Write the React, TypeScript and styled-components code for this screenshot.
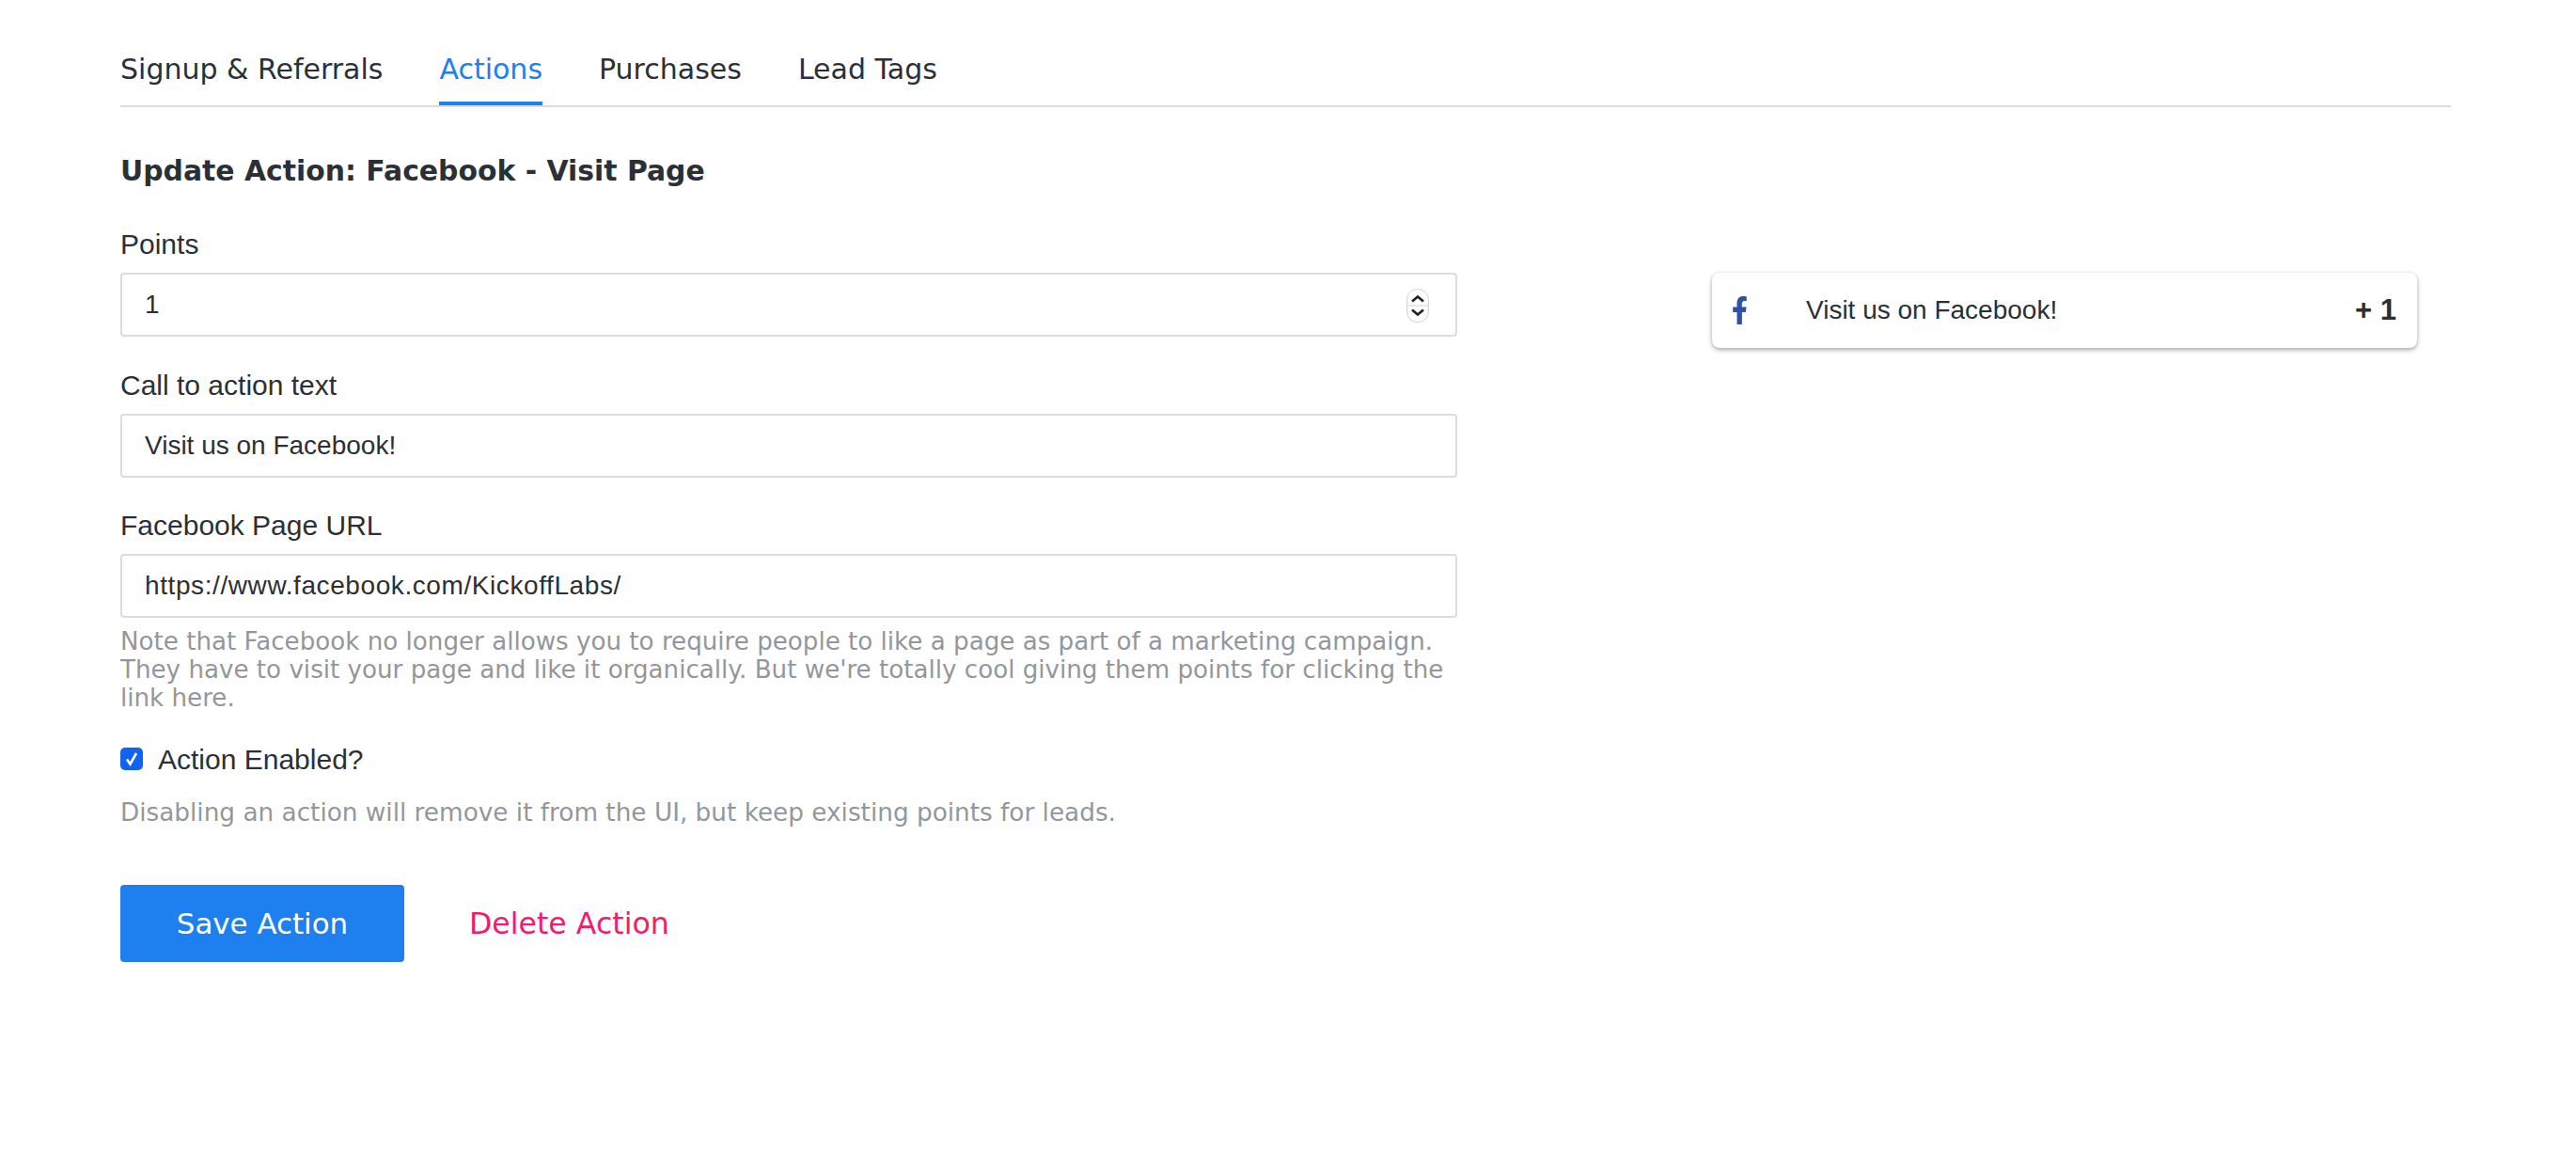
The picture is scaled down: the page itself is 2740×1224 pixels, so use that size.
import React from 'react';
import styled, { createGlobalStyle } from 'styled-components';

const GlobalStyle = createGlobalStyle`
  html, body {
    margin: 0;
    padding: 0;
    background: #fff;
  }
`;

const Page = styled.div`
  width: 2740px;
  height: 1224px;
  box-sizing: border-box;
  padding: 40px 133px 0 128px;
  background: #fff;
  color: #2b3036;
  font-family: 'Liberation Sans', Arial, sans-serif;
  overflow: hidden;
`;

const TabBar = styled.nav`
  display: flex;
  gap: 60px;
  height: 74px;
  box-sizing: border-box;
  border-bottom: 2px solid #dcdcdc;
`;

const Tab = styled.a<{ $active?: boolean }>`
  height: 72px;
  box-sizing: border-box;
  line-height: 68px;
  font-family: 'DejaVu Sans', Verdana, sans-serif;
  font-size: 30px;
  color: ${props => (props.$active ? '#1e80ef' : '#2b3036')};
  border-bottom: ${props => (props.$active ? '4px solid #1e80ef' : 'none')};
`;

const Content = styled.div`
  display: flex;
`;

const FormColumn = styled.form`
  width: 1422px;
  flex: none;
`;

const Heading = styled.h2`
  margin: 46px 0 0;
  height: 44px;
  line-height: 44px;
  font-family: 'DejaVu Sans', Verdana, sans-serif;
  font-size: 29.85px;
  font-weight: 700;
  color: #2b3036;
`;

const FieldGroup = styled.div`
  margin-top: 36px;
`;

const NextGroup = styled.div`
  margin-top: 31.5px;
`;

const Label = styled.label`
  display: block;
  height: 40px;
  line-height: 40px;
  font-size: 30px;
  color: #2b3036;
  margin-bottom: 10px;
`;

const InputWrap = styled.div`
  position: relative;
`;

const TextInput = styled.input<{ $spaced?: boolean }>`
  display: block;
  width: 100%;
  height: 68px;
  box-sizing: border-box;
  padding: 0 24px;
  border: 2px solid #dcdcdc;
  border-radius: 4px;
  background: #fff;
  font-family: 'Liberation Sans', Arial, sans-serif;
  font-size: 28px;
  letter-spacing: ${props => (props.$spaced ? '0.59px' : 'normal')};
  color: #2b3036;
  outline: none;
`;

const Spinner = styled.div`
  position: absolute;
  top: 17px;
  right: 30px;
  width: 24px;
  height: 36px;
`;

const Hint = styled.p<{ $top: number; $size: number }>`
  margin: ${props => props.$top}px 0 0;
  font-family: 'DejaVu Sans', Verdana, sans-serif;
  font-size: ${props => props.$size}px;
  line-height: 30px;
  color: #93979b;
`;

const CheckRow = styled.label`
  display: flex;
  align-items: center;
  gap: 16px;
  margin-top: 31px;
  height: 40px;
  font-size: 30px;
  color: #2b3036;
`;

const CheckBox = styled.span`
  display: flex;
  align-items: center;
  justify-content: center;
  width: 24px;
  height: 24px;
  margin-bottom: 2px;
  border-radius: 5px;
  background: #0f62f2;
`;

const ActionRow = styled.div`
  display: flex;
  align-items: center;
  gap: 69px;
  margin-top: 62px;
`;

const SaveButton = styled.button`
  width: 302px;
  height: 82px;
  border: none;
  border-radius: 4px;
  background: #1e80ef;
  color: #fff;
  font-family: 'DejaVu Sans', Verdana, sans-serif;
  font-size: 30.9px;
`;

const DeleteLink = styled.a`
  font-family: 'DejaVu Sans', Verdana, sans-serif;
  font-size: 31.6px;
  color: #f51b6a;
`;

const PreviewColumn = styled.aside`
  margin-left: 271px;
  padding-top: 176px;
  width: 750px;
  flex: none;
`;

const PreviewCard = styled.div`
  display: flex;
  align-items: center;
  height: 80px;
  box-sizing: border-box;
  padding: 0 22px 0 21px;
  border-radius: 8px;
  background: #fff;
  box-shadow: 0 2px 5px rgba(0, 0, 0, 0.35), 0 0 3px rgba(0, 0, 0, 0.05);
`;

const PreviewIcon = styled.svg`
  flex: none;
  width: 17px;
  height: 30px;
  margin-right: 62px;
`;

const PreviewText = styled.span`
  flex: 1;
  font-size: 28px;
  color: #2b3036;
`;

const PreviewPoints = styled.span`
  font-size: 31px;
  font-weight: 700;
  color: #2b3036;
`;

const App: React.FC = () => {
  return (
    <Page>
      <GlobalStyle />
      <TabBar>
        <Tab>Signup &amp; Referrals</Tab>
        <Tab $active>Actions</Tab>
        <Tab>Purchases</Tab>
        <Tab>Lead Tags</Tab>
      </TabBar>
      <Content>
        <FormColumn>
          <Heading>Update Action: Facebook - Visit Page</Heading>
          <FieldGroup>
            <Label>Points</Label>
            <InputWrap>
              <TextInput type="text" defaultValue="1" />
              <Spinner>
                <svg width="24" height="36" viewBox="0 0 24 36">
                  <rect x="0.5" y="0.5" width="23" height="35" rx="11" fill="#fdfdfd" stroke="#d4d4d4" />
                  <path d="M0.5 18H23.5" stroke="#d4d4d4" />
                  <path d="M6 13.5l6-5 6 5M6 22.5l6 5 6-5" fill="none" stroke="#222" strokeWidth="2.6" />
                </svg>
              </Spinner>
            </InputWrap>
          </FieldGroup>
          <NextGroup>
            <Label>Call to action text</Label>
            <TextInput type="text" defaultValue="Visit us on Facebook!" />
          </NextGroup>
          <NextGroup>
            <Label>Facebook Page URL</Label>
            <TextInput type="text" $spaced defaultValue="https://www.facebook.com/KickoffLabs/" />
          </NextGroup>
          <Hint $top={10} $size={26.15}>
            Note that Facebook no longer allows you to require people to like a page as part of a marketing campaign.
            They have to visit your page and like it organically. But we're totally cool giving them points for clicking the link here.
          </Hint>
          <CheckRow>
            <CheckBox>
              <svg width="16" height="18" viewBox="0 0 16 18">
                <path d="M3 9.5l3.5 5L13 3" fill="none" stroke="#fff" strokeWidth="2.6" />
              </svg>
            </CheckBox>
            Action Enabled?
          </CheckRow>
          <Hint $top={21} $size={26.3}>Disabling an action will remove it from the UI, but keep existing points for leads.</Hint>
          <ActionRow>
            <SaveButton type="button">Save Action</SaveButton>
            <DeleteLink>Delete Action</DeleteLink>
          </ActionRow>
        </FormColumn>
        <PreviewColumn>
          <PreviewCard>
            <PreviewIcon viewBox="0 0 320 512" preserveAspectRatio="none">
              <path
                fill="#2f4fa8"
                d="M279.14 288l14.22-92.66h-88.91v-60.13c0-25.35 12.42-50.06 52.24-50.06h40.42V6.26S260.43 0 225.36 0c-73.22 0-121.08 44.38-121.08 124.72v70.62H22.89V288h81.39v224h100.17V288z"
              />
            </PreviewIcon>
            <PreviewText>Visit us on Facebook!</PreviewText>
            <PreviewPoints>+ 1</PreviewPoints>
          </PreviewCard>
        </PreviewColumn>
      </Content>
    </Page>
  );
};

export default App;
